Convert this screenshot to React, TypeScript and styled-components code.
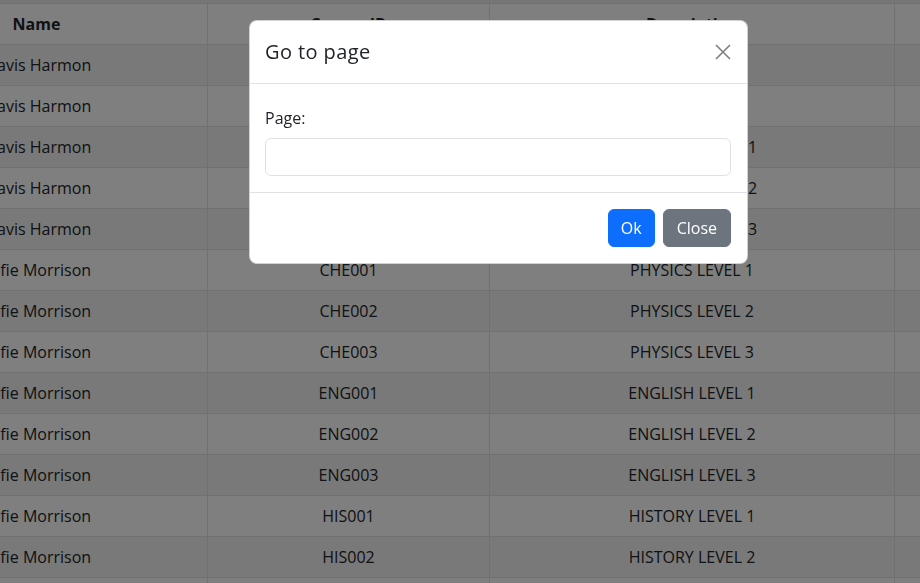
import React from "react";
import styled, { createGlobalStyle } from "styled-components";

const GlobalStyle = createGlobalStyle`
  html, body { margin: 0; padding: 0; }
  body {
    font-family: "Open Sans", "Noto Sans", Arial, sans-serif;
    font-size: 16px;
    line-height: 1.5;
    color: #212529;
    background: #fff;
    overflow: hidden;
  }
  * { box-sizing: border-box; }
`;

const Page = styled.div`
  width: 920px;
  height: 583px;
  overflow: hidden;
`;

const TopStrip = styled.div`
  height: 3px;
  background: #e9ecef;
`;

const Table = styled.table`
  border-collapse: collapse;
  table-layout: fixed;
  width: 1229px;
  margin-left: -135px;
  border-top: 1px solid #dee2e6;
`;

const HeadCell = styled.th<{ $align?: string }>`
  padding: 8px;
  font-weight: 700;
  text-align: ${(p) => p.$align || "center"};
  border: 1px solid #dee2e6;
  border-top: 0;
  height: 41px;
`;

const Row = styled.tr<{ $striped: boolean }>`
  background: ${(p) => (p.$striped ? "#f2f2f2" : "#fff")};
`;

const Cell = styled.td`
  padding: 8px;
  text-align: center;
  border: 1px solid #dee2e6;
  white-space: nowrap;
  height: 41px;
`;

const Backdrop = styled.div`
  position: fixed;
  inset: 0;
  background: rgba(0, 0, 0, 0.5);
`;

const Dialog = styled.div`
  position: fixed;
  top: 20px;
  left: 249px;
  width: 499px;
  background: #fff;
  border: 1px solid rgba(0, 0, 0, 0.175);
  border-radius: 8px;
  font-family: "Open Sans", "Noto Sans", Arial, sans-serif;
`;

const Header = styled.div`
  display: flex;
  align-items: center;
  justify-content: space-between;
  padding: 16px 16px 16px 15px;
  border-bottom: 1px solid #dee2e6;
`;

const Title = styled.h5`
  margin: 0;
  font-size: 20px;
  font-weight: 400;
  line-height: 1.5;
  letter-spacing: 0.4px;
  color: #212529;
`;

const CloseX = styled.button`
  display: flex;
  align-items: center;
  justify-content: center;
  width: 16px;
  height: 16px;
  padding: 0;
  border: 0;
  background: transparent;
  opacity: 0.5;
  cursor: pointer;
`;

const Body = styled.div`
  padding: 22px 16px 16px 15px;
`;

const Label = styled.label`
  display: block;
  margin-bottom: 8px;
  color: #212529;
`;

const Input = styled.input`
  display: block;
  width: 100%;
  height: 38px;
  padding: 6px 12px;
  font: inherit;
  border: 1px solid #dee2e6;
  border-radius: 6px;
  outline: none;
`;

const Footer = styled.div`
  display: flex;
  justify-content: flex-end;
  gap: 8px;
  padding: 16px 16px 16px 15px;
  border-top: 1px solid #dee2e6;
`;

const Button = styled.button<{ $variant: "primary" | "secondary" }>`
  height: 38px;
  padding: 6px ${(p) => (p.$variant === "primary" ? "12px" : "13px")};
  font-family: inherit;
  font-size: 16px;
  line-height: 1.5;
  color: #fff;
  border-radius: 6px;
  border: 1px solid ${(p) => (p.$variant === "primary" ? "#0d6efd" : "#6c757d")};
  background: ${(p) => (p.$variant === "primary" ? "#0d6efd" : "#6c757d")};
  cursor: pointer;
`;

const rows: [string, string, string][] = [
  ["Travis Harmon", "ART001", "ART LEVEL 1"],
  ["Travis Harmon", "ART002", "ART LEVEL 2"],
  ["Travis Harmon", "BIO001", "BIOLOGY LEVEL 1"],
  ["Travis Harmon", "BIO002", "BIOLOGY LEVEL 2"],
  ["Travis Harmon", "BIO003", "BIOLOGY LEVEL 3"],
  ["Sofie Morrison", "CHE001", "PHYSICS LEVEL 1"],
  ["Sofie Morrison", "CHE002", "PHYSICS LEVEL 2"],
  ["Sofie Morrison", "CHE003", "PHYSICS LEVEL 3"],
  ["Sofie Morrison", "ENG001", "ENGLISH LEVEL 1"],
  ["Sofie Morrison", "ENG002", "ENGLISH LEVEL 2"],
  ["Sofie Morrison", "ENG003", "ENGLISH LEVEL 3"],
  ["Sofie Morrison", "HIS001", "HISTORY LEVEL 1"],
  ["Sofie Morrison", "HIS002", "HISTORY LEVEL 2"],
  ["Sofie Morrison", "HIS003", "HISTORY LEVEL 3"],
];

export default function App() {
  return (
    <>
      <GlobalStyle />
      <Page>
        <TopStrip />
        <Table>
          <colgroup>
            <col style={{ width: 342 }} />
            <col style={{ width: 282 }} />
            <col style={{ width: 405 }} />
            <col style={{ width: 200 }} />
          </colgroup>
          <thead>
            <tr>
              <HeadCell>Name</HeadCell>
              <HeadCell>Course ID</HeadCell>
              <HeadCell>Description</HeadCell>
              <HeadCell>Grade</HeadCell>
            </tr>
          </thead>
          <tbody>
            {rows.map((r, i) => (
              <Row key={i} $striped={i % 2 === 0}>
                <Cell>{r[0]}</Cell>
                <Cell>{r[1]}</Cell>
                <Cell>{r[2]}</Cell>
                <Cell />
              </Row>
            ))}
          </tbody>
        </Table>
      </Page>
      <Backdrop />
      <Dialog role="dialog">
        <Header>
          <Title>Go to page</Title>
          <CloseX aria-label="Close">
            <svg width="16" height="16" viewBox="0 0 16 16">
              <path
                d="M1 1 L15 15 M15 1 L1 15"
                stroke="#000"
                strokeWidth="1.6"
                fill="none"
              />
            </svg>
          </CloseX>
        </Header>
        <Body>
          <Label htmlFor="page">Page:</Label>
          <Input id="page" type="text" />
        </Body>
        <Footer>
          <Button $variant="primary">Ok</Button>
          <Button $variant="secondary">Close</Button>
        </Footer>
      </Dialog>
    </>
  );
}
